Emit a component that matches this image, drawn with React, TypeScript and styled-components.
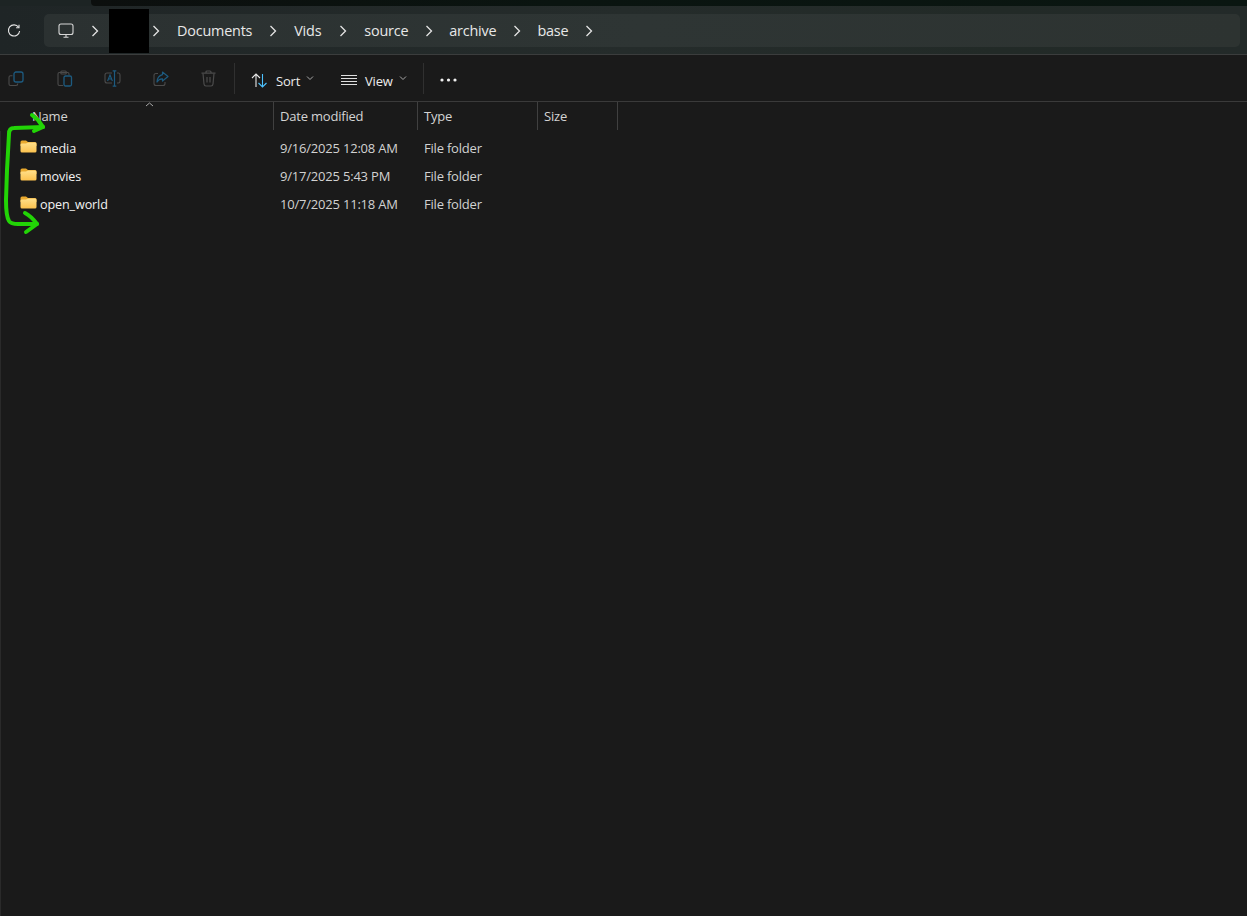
import React from "react";
import styled, { createGlobalStyle } from "styled-components";

const Global = createGlobalStyle`
  html, body { margin: 0; padding: 0; background: #1a1a1a; height: 100%; }
  #root { height: 100%; }
  * { box-sizing: border-box; }
`;

const Window = styled.div`
  position: relative;
  width: 1247px;
  height: 916px;
  overflow: hidden;
  background: #1a1a1a;
  display: flex;
  flex-direction: column;
  font-family: "Open Sans", "Noto Sans", sans-serif;
`;

const TitleSliver = styled.div`
  height: 6px;
  padding-left: 91px;
  background: #1d2424;
`;
const TitleDark = styled.div`
  height: 6px;
  border-bottom-left-radius: 4px;
  background: linear-gradient(90deg, #0c0f0e, #0a1410 40%, #0a1611);
`;

const AddressRow = styled.div`
  height: 49px;
  display: flex;
  align-items: flex-start;
  padding: 8px 7px 0 0;
  background: linear-gradient(90deg, #1f2526, #252c2b 50%, #222a27 80%, #232a29);
  border-bottom: 1px solid #3b3d3d;
`;
const Refresh = styled.div`
  width: 44px;
  height: 33px;
  padding-left: 7px;
  display: flex;
  align-items: center;
  color: #e4e4e4;
`;
const Crumbs = styled.div`
  flex: 1;
  height: 33px;
  display: flex;
  align-items: center;
  border-radius: 5px;
  padding-left: 14px;
  background: linear-gradient(90deg, #2b3131, #2e3534 50%, #2d3331);
`;
const PcIcon = styled.span`
  display: flex;
  width: 16px;
`;
const Crumb = styled.span`
  font-size: 14.4px;
  letter-spacing: -0.2px;
  color: #e8e8e8;
  line-height: 33px;
  white-space: nowrap;
`;
const HiddenCrumb = styled.span`
  width: 18px;
`;
const ChevronCell = styled.span<{ $w: number }>`
  width: ${(p) => p.$w}px;
  flex: none;
  display: flex;
  justify-content: center;
  color: #e4e4e4;
`;
const Redacted = styled.div`
  position: absolute;
  left: 109px;
  top: 9px;
  width: 40px;
  height: 44px;
  background: #000;
`;

const Toolbar = styled.div`
  height: 47px;
  display: flex;
  align-items: center;
  padding-left: 8px;
  background: #1a1a1a;
  border-bottom: 1px solid #3a3a3a;
`;
const ToolIcon = styled.span<{ $w: number }>`
  width: ${(p) => p.$w}px;
  display: flex;
  align-items: center;
  padding-top: 1px;
`;
const Divider = styled.span`
  width: 1px;
  height: 31px;
  background: #303030;
  margin-right: 16px;
`;
const ToolText = styled.span`
  font-size: 13px;
  letter-spacing: -0.2px;
  color: #ececec;
  margin: 5px 6px 0 8px;
`;
const ToolButton = styled.div<{ $w: number }>`
  width: ${(p) => p.$w}px;
  display: flex;
  align-items: center;
`;
const ToolGlyph = styled.svg`
  margin-top: 4px;
  flex: none;
`;
const MoreDots = styled.svg`
  margin-top: 4px;
`;

const ColumnHeader = styled.div`
  position: relative;
  height: 29px;
  display: grid;
  grid-template-columns: 274px 144px 120px 80px;
  justify-content: start;
`;
const Col = styled.div<{ $first?: boolean }>`
  height: 28px;
  display: flex;
  align-items: center;
  padding-left: ${(p) => (p.$first ? 32 : 6)}px;
  border-right: 1px solid #404040;
  font-size: 13px;
  letter-spacing: -0.2px;
  color: #d4d4d4;
`;
const SortCaret = styled.svg`
  position: absolute;
  left: 145px;
  top: 0;
`;

const List = styled.div`
  flex: 1;
  display: flex;
  flex-direction: column;
  padding-top: 3px;
  border-left: 1px solid #2a2a2a;
`;
const Row = styled.div`
  height: 28px;
  display: grid;
  grid-template-columns: 272px 144px 120px;
  align-items: center;
  font-size: 13px;
  letter-spacing: -0.2px;
  color: #d2d2d2;
`;
const NameCell = styled.div`
  display: flex;
  align-items: center;
  padding-left: 19px;
  gap: 3px;
  color: #f2f2f2;
  font-size: 12.6px;
  letter-spacing: -0.12px;
`;
const FolderIcon = styled.svg`
  margin-top: -3px;
  flex: none;
`;
const Cell = styled.div`
  padding-left: 7px;
`;

const Annotation = styled.svg`
  position: absolute;
  left: 0;
  top: 105px;
`;

const Chevron = () => (
  <svg width="8" height="12" viewBox="0 0 8 12" fill="none" stroke="currentColor" strokeWidth="1.3">
    <path d="M1.5 1 L6.5 6 L1.5 11" />
  </svg>
);

const Caret = () => (
  <svg width="8" height="6" viewBox="0 0 8 6" fill="none" stroke="#a8a8a8" strokeWidth="1">
    <path d="M1 1.5 L4 4.5 L7 1.5" />
  </svg>
);

const Folder = () => (
  <FolderIcon width="17" height="13" viewBox="0 0 17 13">
    <path d="M0.5 2 Q0.5 0.5 2 0.5 H6 L8 2 H15 Q16.5 2 16.5 3.5 V6 H0.5 Z" fill="#e9a92e" />
    <path d="M0.5 4.6 Q0.5 3.4 2 3.4 H6 L8 2.6 H15 Q16.5 2.6 16.5 4 V11 Q16.5 12.5 15 12.5 H2 Q0.5 12.5 0.5 11 Z" fill="url(#fg)" />
  </FolderIcon>
);

const G = "#4b4b4b";
const B = "#1d5b80";

const rows = [
  ["media", "9/16/2025 12:08 AM"],
  ["movies", "9/17/2025 5:43 PM"],
  ["open_world", "10/7/2025 11:18 AM"],
];

export default function App() {
  return (
    <Window>
      <Global />
      <svg width="0" height="0" style={{ position: "absolute" }}>
        <defs>
          <linearGradient id="fg" x1="0" y1="0" x2="0" y2="1">
            <stop offset="0" stopColor="#ffdf8a" />
            <stop offset="1" stopColor="#fcc24e" />
          </linearGradient>
        </defs>
      </svg>
      <TitleSliver>
        <TitleDark />
      </TitleSliver>
      <AddressRow>
        <Refresh>
          <svg width="14" height="14" viewBox="0 0 14 14" fill="none" stroke="currentColor" strokeWidth="1.1">
            <path d="M11.6 3.2 A5.6 5.6 0 1 0 12.6 7" />
            <path d="M12 0.8 V3.7 H9.1" />
          </svg>
        </Refresh>
        <Crumbs>
          <PcIcon>
            <svg width="16" height="16" viewBox="0 0 16 16" fill="none" stroke="#d8d8d8" strokeWidth="1.1">
              <rect x="1" y="1" width="14" height="10.5" rx="2" />
              <path d="M5.5 14.2 H10.5 M8 11.5 V14" />
            </svg>
          </PcIcon>
          <ChevronCell $w={42}><Chevron /></ChevronCell>
          <HiddenCrumb />
          <ChevronCell $w={43}><Chevron /></ChevronCell>
          <Crumb>Documents</Crumb>
          <ChevronCell $w={42}><Chevron /></ChevronCell>
          <Crumb>Vids</Crumb>
          <ChevronCell $w={43}><Chevron /></ChevronCell>
          <Crumb>source</Crumb>
          <ChevronCell $w={41}><Chevron /></ChevronCell>
          <Crumb>archive</Crumb>
          <ChevronCell $w={41}><Chevron /></ChevronCell>
          <Crumb>base</Crumb>
          <ChevronCell $w={41}><Chevron /></ChevronCell>
        </Crumbs>
      </AddressRow>
      <Redacted />
      <Toolbar>
        <ToolIcon $w={49}>
          <svg width="16" height="16" viewBox="0 0 16 16" fill="none" strokeWidth="1.1">
            <path d="M4.5 4.8 H2.5 Q1 4.8 1 6.3 V13 Q1 14.5 2.5 14.5 H8 Q9.8 14.5 9.8 12.5" stroke={G} />
            <rect x="6" y="1" width="9" height="10" rx="2" stroke={B} strokeWidth="1.3" />
          </svg>
        </ToolIcon>
        <ToolIcon $w={47}>
          <svg width="16" height="17" viewBox="0 0 16 17" fill="none" strokeWidth="1.1">
            <path d="M6 15.5 H2.5 Q1 15.5 1 14 V4 Q1 2.5 2.5 2.5 H10.5 Q12 2.5 12 4 V5" stroke={G} />
            <rect x="3.8" y="1" width="5.5" height="3" rx="1" stroke={G} />
            <rect x="7" y="6" width="7.5" height="10" rx="1.5" stroke={B} strokeWidth="1.3" />
          </svg>
        </ToolIcon>
        <ToolIcon $w={49}>
          <svg width="17" height="17" viewBox="0 0 17 17" fill="none" strokeWidth="1.1">
            <path d="M8 3 H3 Q1 3 1 5 V11 Q1 13 3 13 H8 M13 3 H14.5 Q16 3 16 5 V11 Q16 13 14.5 13 H13" stroke={G} />
            <path d="M3.6 11 L6 5 L8.4 11 M4.5 9 H7.5" stroke={B} />
            <path d="M10.5 0.8 V16.2 M8.7 0.8 H12.3 M8.7 16.2 H12.3" stroke={B} strokeWidth="1.2" />
          </svg>
        </ToolIcon>
        <ToolIcon $w={48}>
          <svg width="16" height="16" viewBox="0 0 16 16" fill="none" strokeWidth="1.1">
            <path d="M5 2.5 H3 Q1 2.5 1 4.5 V12.5 Q1 14.5 3 14.5 H10 Q12 14.5 12 12.5 V11" stroke={G} />
            <path d="M9.5 1 L15 5.5 L9.5 10 V7.8 Q6 7.5 4 11 Q4.3 5 9.5 3.6 Z" stroke={B} strokeWidth="1.2" strokeLinejoin="round" />
          </svg>
        </ToolIcon>
        <ToolIcon $w={33}>
          <svg width="15" height="17" viewBox="0 0 15 17" fill="none" stroke={G} strokeWidth="1.2">
            <path d="M0.5 3.2 H14.5 M5 3 V2 Q5 1 6 1 H9 Q10 1 10 2 V3" />
            <path d="M2 3.5 L3 14 Q3.2 16 5 16 H10 Q11.8 16 12 14 L13 3.5" />
            <path d="M6 7 V12.5 M9 7 V12.5" />
          </svg>
        </ToolIcon>
        <Divider />
        <ToolButton $w={90}>
          <ToolGlyph width="17" height="15" viewBox="0 0 17 15" fill="none" strokeWidth="1.1">
            <path d="M5 14 V1 M1 5 L5 1 L9 5" stroke="#e8e8e8" />
            <path d="M11.5 1 V14 M7.5 10 L11.5 14 L15.5 10" stroke="#4cc2ff" />
          </ToolGlyph>
          <ToolText>Sort</ToolText>
          <Caret />
        </ToolButton>
        <ToolButton $w={82}>
          <ToolGlyph width="16" height="12" viewBox="0 0 16 12" fill="none" stroke="#dedede" strokeWidth="1">
            <path d="M0 1.5 H16 M0 4.5 H16 M0 7.5 H16 M0 10.5 H16" />
          </ToolGlyph>
          <ToolText>View</ToolText>
          <Caret />
        </ToolButton>
        <Divider />
        <MoreDots width="17" height="4" viewBox="0 0 17 4" fill="#f0f0f0">
          <circle cx="2" cy="2" r="1.6" />
          <circle cx="8.5" cy="2" r="1.6" />
          <circle cx="15" cy="2" r="1.6" />
        </MoreDots>
      </Toolbar>
      <ColumnHeader>
        <Col $first>Name</Col>
        <Col>Date modified</Col>
        <Col>Type</Col>
        <Col>Size</Col>
        <SortCaret width="9" height="5" viewBox="0 0 9 5" fill="none" stroke="#a8a8a8" strokeWidth="1">
          <path d="M1 4 L4.5 1 L8 4" />
        </SortCaret>
      </ColumnHeader>
      <List>
        {rows.map(([name, date]) => (
          <Row key={name}>
            <NameCell>
              <Folder />
              {name}
            </NameCell>
            <Cell>{date}</Cell>
            <Cell>File folder</Cell>
          </Row>
        ))}
      </List>
      <Annotation width="60" height="135" viewBox="0 105 60 135" fill="none" stroke="#22d406" strokeWidth="4" strokeLinecap="round" strokeLinejoin="round">
        <path d="M32 115 L38 120 L43 127 L34 131" />
        <path d="M43 127 L14 128 Q9 128 9 134 L7 170 L6 200 Q6 216 9 221 Q11 224 18 224 L37 224" />
        <path d="M25 213 Q31 216 37 224 L26 232" />
      </Annotation>
    </Window>
  );
}
